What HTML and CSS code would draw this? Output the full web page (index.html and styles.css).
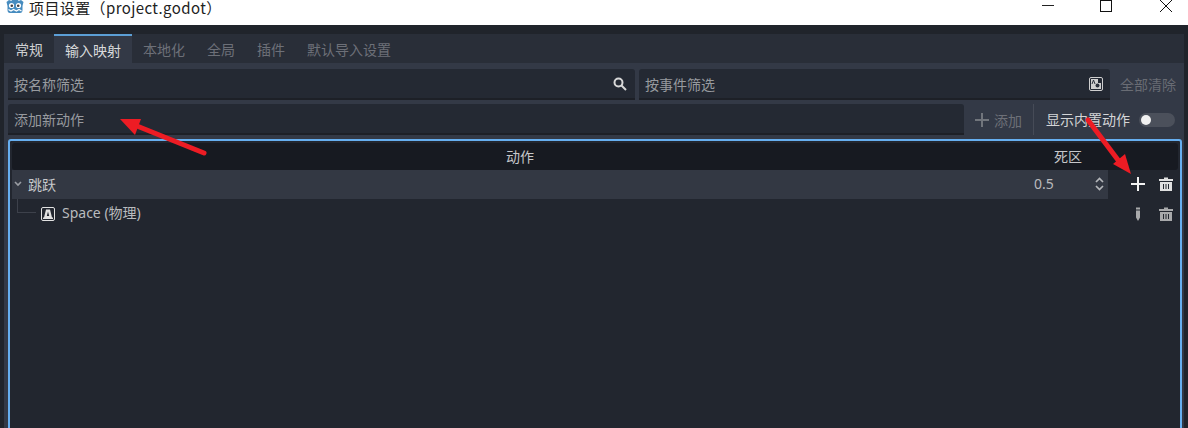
FILE: index.html
```html
<!DOCTYPE html>
<html lang="zh">
<head>
<meta charset="utf-8">
<title>项目设置</title>
<link rel="stylesheet" href="styles.css">
</head>
<body>
<header class="titlebar">
  <div class="title-left">
    <svg class="app-icon" width="18" height="16" viewBox="0 0 18 16"><path d="M0.5 4 L3 2 L5.5 3 L6.5 0 H11.5 L12.5 3 L15 2 L17.5 4 L16.5 8 V12 Q16.5 15 14 15 H4 Q1.5 15 1.5 12 V8 Z" fill="#478cbf"/><circle cx="5.5" cy="7.5" r="2.6" fill="#fff"/><circle cx="12.5" cy="7.5" r="2.6" fill="#fff"/><circle cx="5.8" cy="7.8" r="1.3" fill="#414042"/><circle cx="12.2" cy="7.8" r="1.3" fill="#414042"/><path d="M2.5 11.5 L5 13 L7.5 11.5 L10.5 13 L13 11.5 L15.5 13" fill="none" stroke="#fff" stroke-width="1.2"/></svg>
    <span class="title-text">项目设置（project.godot）</span>
  </div>
  <div class="win-controls">
    <svg class="win-min" width="14" height="14" viewBox="0 0 14 14"><path d="M1 6.5 H13" stroke="#222" stroke-width="1"/></svg>
    <svg width="14" height="14" viewBox="0 0 14 14"><rect x="1.5" y="1.5" width="11" height="11" fill="none" stroke="#111" stroke-width="1"/></svg>
    <svg width="14" height="14" viewBox="0 0 14 14"><path d="M1 1 L13 13 M13 1 L1 13" stroke="#111" stroke-width="1"/></svg>
  </div>
</header>
<main class="window">
  <nav class="tabs">
    <span class="tab plain">常规</span>
    <span class="tab active">输入映射</span>
    <span class="tab off">本地化</span>
    <span class="tab off">全局</span>
    <span class="tab off">插件</span>
    <span class="tab off">默认导入设置</span>
  </nav>
  <section class="panel">
    <div class="row filters">
      <div class="field grow-name">
        <span class="ph">按名称筛选</span>
        <svg width="14" height="14" viewBox="0 0 14 14"><circle cx="5.5" cy="5.5" r="4" fill="none" stroke="#d8d8d8" stroke-width="2"/><path d="M8.5 8.5 L13 13" stroke="#d8d8d8" stroke-width="2"/></svg>
      </div>
      <div class="field grow-event">
        <span class="ph">按事件筛选</span>
        <svg width="14" height="14" viewBox="0 0 14 14"><rect x="0.5" y="0.5" width="13" height="13" rx="1.5" fill="none" stroke="#cfcfcf"/><path d="M2 2 H9 V6 H12 V12 H2 Z" fill="#cfcfcf"/><circle cx="8.5" cy="8.5" r="2" fill="#2a2f3a"/><path d="M3 7 L4.5 3 L6 7" stroke="#2a2f3a" fill="none"/></svg>
      </div>
      <span class="clear-all">全部清除</span>
    </div>
    <div class="row adds">
      <div class="field grow-add"><span class="ph">添加新动作</span></div>
      <div class="add-btn">
        <svg width="14" height="14" viewBox="0 0 14 14"><path d="M7 0 V14 M0 7 H14" stroke="#71757c" stroke-width="2"/></svg>
        <span>添加</span>
      </div>
      <div class="sep"></div>
      <span class="builtin">显示内置动作</span>
      <span class="toggle"><span class="knob"></span></span>
    </div>
    <div class="tree">
      <div class="tree-head">
        <span class="col-action">动作</span>
        <span class="col-dead">死区</span>
      </div>
      <div class="tree-row action-row">
        <div class="action-cell">
          <svg class="chev" width="8" height="6" viewBox="0 0 8 6"><path d="M1 1 L4 4 L7 1" fill="none" stroke="#9a9da3" stroke-width="1.6"/></svg>
          <span class="action-name">跳跃</span>
          <span class="dead-val">0.5</span>
          <svg class="spin" width="9" height="14" viewBox="0 0 9 14"><path d="M1 5 L4.5 1.5 L8 5 M1 9 L4.5 12.5 L8 9" fill="none" stroke="#b4b6ba" stroke-width="1.7"/></svg>
        </div>
        <div class="actions first">
          <svg width="14" height="14" viewBox="0 0 14 14"><path d="M7 0 V14 M0 7 H14" stroke="#f2f2f2" stroke-width="2"/></svg>
          <svg width="14" height="14" viewBox="0 0 14 14"><path d="M5 0.5 H9 V2 H14 V4 H0 V2 H5 Z M1 5 H13 V14 H1 Z" fill="#e0e0e0"/><path d="M4.5 7 V12 M7 7 V12 M9.5 7 V12" stroke="#22262f" stroke-width="1"/></svg>
        </div>
      </div>
      <div class="tree-row event-row">
        <div class="event-cell">
          <span class="branch"></span>
          <svg width="14" height="14" viewBox="0 0 14 14"><rect x="0.5" y="0.5" width="13" height="13" rx="1.5" fill="none" stroke="#e2e2e2"/><path d="M2 12 V10.5 H3 L5 2.5 H9 L11 10.5 H12 V12 Z" fill="#e2e2e2"/><path d="M5.8 9 L7 4.5 L8.2 9 Z" fill="#22262f"/></svg>
          <span class="event-name">Space (物理)</span>
        </div>
        <div class="actions dim">
          <svg width="14" height="14" viewBox="0 0 14 14"><path d="M5 0.5 H9 V2.5 H5 Z M5 3.5 H9 V10.5 L7 14 L5 10.5 Z" fill="#a8a9ab"/></svg>
          <svg width="14" height="14" viewBox="0 0 14 14"><path d="M5 0.5 H9 V2 H14 V4 H0 V2 H5 Z M1 5 H13 V14 H1 Z" fill="#a8a9ab"/><path d="M4.5 7 V12 M7 7 V12 M9.5 7 V12" stroke="#22262f" stroke-width="1"/></svg>
        </div>
      </div>
    </div>
  </section>
</main>
<svg class="arrows" width="1188" height="428" viewBox="0 0 1188 428">
  <path d="M204 153 L132 124" stroke="#ed1c24" stroke-width="5" stroke-linecap="round"/>
  <path d="M120 119 L141 119 L135 135 Z" fill="#ed1c24"/>
  <path d="M1088 120 L1121 164" stroke="#ed1c24" stroke-width="5" stroke-linecap="round"/>
  <path d="M1131 174 L1113 164 L1125 154 Z" fill="#ed1c24"/>
</svg>
</body>
</html>
```
FILE: styles.css
```css
* { box-sizing: border-box; }
html, body { margin: 0; padding: 0; }
body {
  width: 1188px;
  height: 428px;
  overflow: hidden;
  position: relative;
  background: #fff;
  font-family: "Noto Sans", "Noto Sans CJK SC", sans-serif;
  font-size: 14px;
}
.titlebar {
  height: 25px;
  background: #fff;
  display: flex;
  justify-content: space-between;
  align-items: flex-start;
  overflow: hidden;
}
.title-left { display: flex; align-items: center; height: 15px; padding-left: 6px; gap: 5px; }
.app-icon { flex: none; margin-top: -3px; }
.title-text { font-size: 15px; letter-spacing: 0.4px; color: #222; font-family: "Noto Sans CJK SC", sans-serif; line-height: 15px; white-space: nowrap; }
.win-controls { display: flex; gap: 46px; padding-right: 15px; margin-top: -1px; }
.win-min { margin-right: -2px; }
.window {
  height: 403px;
  background: #20242b;
  padding: 9px 4px 0;
}
.tabs { display: flex; height: 29px; background: #292e38; }
.tab {
  height: 29px;
  line-height: 30px;
  padding: 0 11px;
  font-size: 14px;
  font-family: "Noto Sans CJK SC", sans-serif;
}
.tab.plain { color: #cfd0d2; }
.tab.active { background: #333946; border-top: 2px solid #5c9fd6; color: #d8d9db; line-height: 28px; width: 78px; text-align: center; padding: 0; }
.tab.off { color: #6d7078; }
.panel {
  height: 365px;
  background: #333946;
  padding: 6px 4px 0;
  font-family: "Noto Sans CJK SC", sans-serif;
}
.row { display: flex; align-items: stretch; }
.filters { height: 31px; gap: 4px; }
.field {
  background: #242933;
  border-bottom: 2px solid #1d2027;
  border-radius: 3px 3px 0 0;
  display: flex;
  align-items: center;
  justify-content: space-between;
  padding: 0 6px;
}
.ph { color: #979a9f; font-size: 14px; }
.grow-name { width: 627px; padding-right: 8px; }
.grow-event { width: 471px; padding-right: 7px; }
.clear-all { color: #696c74; font-size: 14px; line-height: 31px; margin-left: 6px; }
.adds { height: 31px; margin-top: 4px; }
.grow-add { width: 956px; }
.add-btn { display: flex; align-items: center; gap: 5px; margin-left: 11px; color: #6d7078; font-size: 14px; width: 58px; }
.sep { width: 1px; background: #464b57; margin: 0; height: 31px; }
.builtin { color: #d4d5d7; font-size: 14px; line-height: 31px; margin-left: 12px; }
.toggle { width: 36px; height: 14px; border-radius: 7px; background: #4b505b; margin: 9px 0 0 9px; position: relative; display: block; }
.knob { position: absolute; left: 2px; top: 2px; width: 10px; height: 10px; border-radius: 50%; background: #f0f0f0; }
.tree {
  margin-top: 4px;
  height: 300px;
  background: #22262f;
  border: 2px solid #66aff0;
  border-radius: 3px;
  padding: 2px 2px 0;
  width: 1174px;
}
.tree-head {
  height: 27px;
  padding-bottom: 2px;
  background: #171a21;
  border-radius: 3px;
  color: #c6c7ca;
  font-size: 14px;
  display: flex;
  align-items: center;
}
.col-action { width: 1016px; text-align: center; }
.col-dead { margin-left: 26px; }
.tree-row { display: flex; height: 29px; }
.action-cell {
  width: 1096px;
  background: #333843;
  display: flex;
  align-items: center;
  padding: 0 0 2px 2px;
  color: #c7c8cb;
}
.chev { flex: none; }
.action-name { margin-left: 6px; font-size: 14px; width: 1006px; }
.dead-val { font-family: "Noto Sans", sans-serif; font-size: 14px; width: 61px; color: #b9babd; }
.spin { flex: none; }
.actions { display: flex; gap: 14px; align-items: center; padding-left: 23px; }
.actions.first { padding-bottom: 1px; }
.event-cell { width: 1096px; display: flex; align-items: center; padding-left: 5px; color: #b9bbbe; }
.branch { width: 19px; height: 14px; margin-top: -15px; margin-right: 5px; border-left: 1px solid #3d414b; border-bottom: 1px solid #3d414b; flex: none; }
.event-name { margin: 0 0 4px 7px; font-family: "Noto Sans", "Noto Sans CJK SC", sans-serif; font-size: 14px; }
.arrows { position: absolute; left: 0; top: 0; pointer-events: none; }
```
